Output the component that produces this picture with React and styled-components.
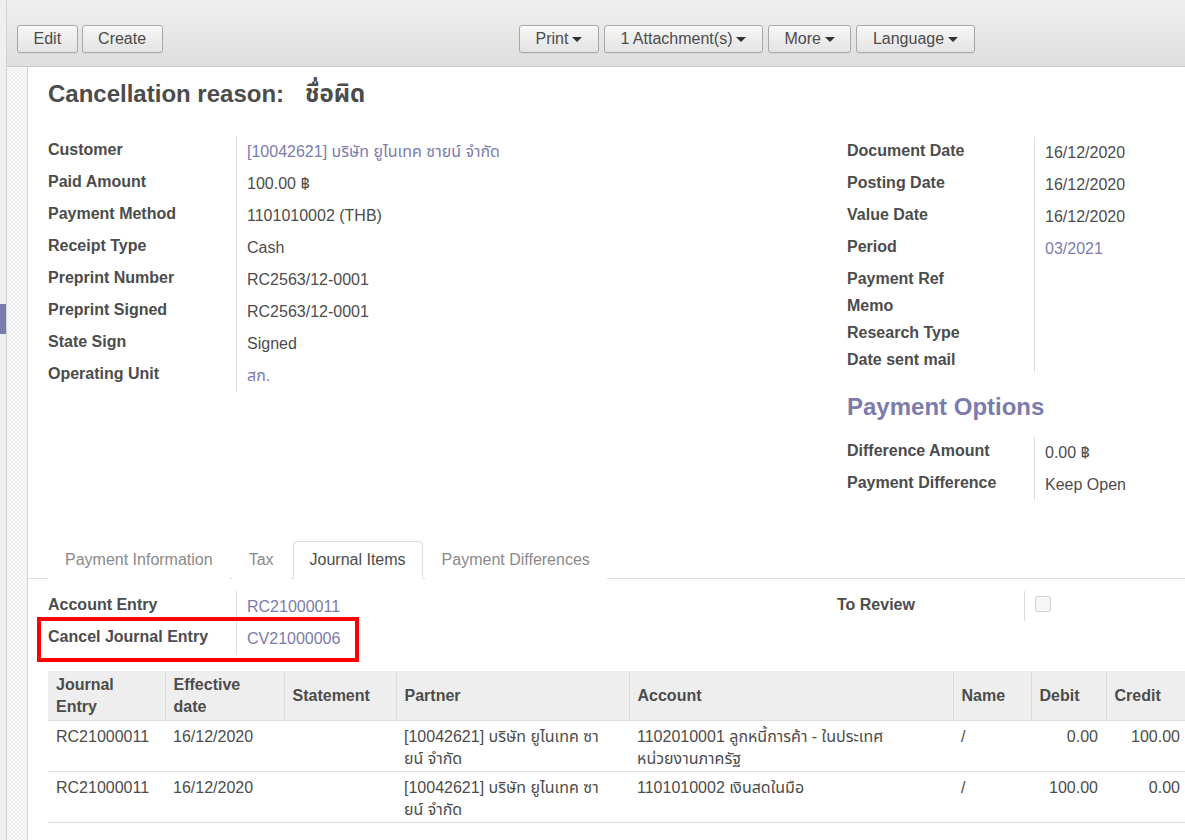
import React from "react";
import styled, { createGlobalStyle } from "styled-components";

const GlobalStyle = createGlobalStyle`
  html, body { margin: 0; padding: 0; overflow: hidden; background: #fff; }
  body {
    font-family: "Liberation Sans", Arial, "Noto Sans Thai", "Noto Sans", sans-serif;
    font-size: 16px;
    color: #4c4c4c;
  }
  * { box-sizing: border-box; }
`;

const Page = styled.div`
  display: flex;
  width: 1185px;
  height: 840px;
  overflow: hidden;
`;

const AppBar = styled.div`
  width: 7px;
  flex: none;
  background: #efefef;
  border-right: 1px solid #d2d2d2;
`;

const AppMarker = styled.div`
  margin-top: 304px;
  width: 6px;
  height: 30px;
  background: #7c7bad;
`;

const Main = styled.div`
  flex: 1;
  display: flex;
  flex-direction: column;
  min-width: 0;
`;

const Toolbar = styled.div`
  height: 67px;
  flex: none;
  display: grid;
  grid-template-columns: 502px auto 1fr;
  align-items: start;
  padding: 25px 0 0 10px;
  background: linear-gradient(to bottom, #f0f0f0, #dedede);
  border-bottom: 1px solid #c9c9c9;
`;

const ButtonGroup = styled.div`
  display: flex;
  gap: ${(p) => p.$gap || 4}px;
`;

const Button = styled.button`
  height: 28px;
  padding: 0 15.5px;
  display: inline-flex;
  align-items: center;
  font-family: inherit;
  font-size: 16px;
  color: #4c4c4c;
  background: linear-gradient(to bottom, #f7f7f7, #e3e3e3);
  border: 1px solid #a8a8a8;
  border-radius: 3px;
  box-shadow: inset 0 1px 0 rgba(255, 255, 255, 0.8), 0 1px 1px rgba(0, 0, 0, 0.06);
  cursor: pointer;
`;

const Caret = styled.span`
  display: inline-block;
  width: 0;
  height: 0;
  margin-left: 4px;
  border-top: 5px solid #333;
  border-left: 5px solid transparent;
  border-right: 5px solid transparent;
`;

const Body = styled.div`
  flex: 1;
  display: flex;
  min-height: 0;
`;

const Gutter = styled.div`
  width: 21px;
  flex: none;
  border-right: 1px solid #d0d0d0;
  background-color: #f7f7f7;
  background-image: repeating-conic-gradient(#efefef 0% 25%, #f9f9f9 0% 50%);
  background-size: 4px 4px;
`;

const Sheet = styled.div`
  flex: 1;
  background: #fff;
  padding: 0 20px;
  min-width: 0;
`;

const Title = styled.h1`
  margin: 13px 0 0;
  display: flex;
  gap: 21px;
  font-size: 24px;
  line-height: 28px;
  font-weight: bold;
  color: #4c4c4c;
`;

const Columns = styled.div`
  display: grid;
  grid-template-columns: ${(p) => p.$left}px 1fr;
  margin-top: ${(p) => p.$top || 0}px;
  align-items: start;
`;

const Column = styled.div`
  display: flex;
  flex-direction: column;
  margin-top: ${(p) => p.$top || 0}px;
`;

const FieldGrid = styled.div`
  display: grid;
  grid-template-columns: ${(p) => p.$label}px 1fr;
`;

const Label = styled.div`
  position: relative;
  font-weight: bold;
  line-height: 20px;
  padding: 4px 10px 3px 0;
  white-space: nowrap;
`;

const Value = styled.div`
  border-left: 1px solid #dddddd;
  line-height: 20px;
  padding: 6px 0 6px 10px;
  color: ${(p) => (p.$link ? "#7c7bad" : "#4c4c4c")};
  white-space: nowrap;
`;

const SectionHeading = styled.h2`
  margin: 20px 0 16px;
  font-size: 24px;
  line-height: 28px;
  font-weight: bold;
  color: #7c7bad;
`;

const Highlight = styled.div`
  position: absolute;
  left: -11px;
  top: -6px;
  width: 322px;
  height: 45px;
  border: 4px solid #f00;
  pointer-events: none;
`;

const Checkbox = styled.span`
  display: block;
  width: 16px;
  height: 16px;
  margin: -1px 0 3px;
  border: 1px solid #cfcfcf;
  border-radius: 3px;
  background: #f7f7f7;
`;

const Tabs = styled.div`
  display: flex;
  margin: 40px -20px 0;
  padding: 0 20px;
  border-bottom: 1px solid #dddddd;
`;

const Tab = styled.div`
  padding: 8px 16px;
  line-height: 20px;
  margin: 0 2px -1px 0;
  border: 1px solid ${(p) => (p.$active ? "#dddddd" : "transparent")};
  border-bottom-color: ${(p) => (p.$active ? "#fff" : "transparent")};
  border-radius: 4px 4px 0 0;
  background: #fff;
  color: ${(p) => (p.$active ? "#4c4c4c" : "#8a8a8a")};
  white-space: nowrap;
`;

const Pane = styled.div`
  padding-top: 12px;
`;

const Table = styled.table`
  margin-top: 16px;
  width: 1140px;
  table-layout: fixed;
  border-collapse: collapse;
`;

const Th = styled.th`
  background: #eeeeee;
  text-align: left;
  vertical-align: middle;
  font-weight: bold;
  line-height: 22px;
  padding: 3px 8px 2px;
  border-bottom: 1px solid #dddddd;
  & + & { border-left: 1px solid #dcdcdc; }
`;

const Td = styled.td`
  text-align: ${(p) => (p.$num ? "right" : "left")};
  vertical-align: top;
  line-height: 22px;
  padding: 5px 8px 1px;
  border-bottom: 1px solid #dddddd;
`;

const leftFields = [
  ["Customer", "[10042621] บริษัท ยูไนเทค ซายน์ จำกัด", true],
  ["Paid Amount", "100.00 ฿"],
  ["Payment Method", "1101010002 (THB)"],
  ["Receipt Type", "Cash"],
  ["Preprint Number", "RC2563/12-0001"],
  ["Preprint Signed", "RC2563/12-0001"],
  ["State Sign", "Signed"],
  ["Operating Unit", "สก.", true],
];

const rightFields = [
  ["Document Date", "16/12/2020"],
  ["Posting Date", "16/12/2020"],
  ["Value Date", "16/12/2020"],
  ["Period", "03/2021", true],
  ["Payment Ref", ""],
  ["Memo", ""],
  ["Research Type", ""],
  ["Date sent mail", ""],
];

const optionFields = [
  ["Difference Amount", "0.00 ฿"],
  ["Payment Difference", "Keep Open"],
];

const cols = [117, 119, 112, 233, 324, 78, 75, 82];

const rows = [
  {
    entry: "RC21000011",
    date: "16/12/2020",
    partner: ["[10042621] บริษัท ยูไนเทค ซา", "ยน์ จำกัด"],
    account: ["1102010001 ลูกหนี้การค้า - ในประเทศ", "หน่วยงานภาครัฐ"],
    name: "/",
    debit: "0.00",
    credit: "100.00",
  },
  {
    entry: "RC21000011",
    date: "16/12/2020",
    partner: ["[10042621] บริษัท ยูไนเทค ซา", "ยน์ จำกัด"],
    account: ["1101010002 เงินสดในมือ"],
    name: "/",
    debit: "100.00",
    credit: "0.00",
  },
];

function Fields({ items, label }) {
  return (
    <FieldGrid $label={label}>
      {items.map(([l, v, link]) => (
        <React.Fragment key={l}>
          <Label>{l}</Label>
          <Value $link={link}>{v}</Value>
        </React.Fragment>
      ))}
    </FieldGrid>
  );
}

function Lines({ parts }) {
  return parts.map((t, i) => (
    <React.Fragment key={i}>
      {i > 0 && <br />}
      {t}
    </React.Fragment>
  ));
}

export default function App() {
  return (
    <>
      <GlobalStyle />
      <Page>
        <AppBar>
          <AppMarker />
        </AppBar>
        <Main>
          <Toolbar>
            <ButtonGroup>
              <Button>Edit</Button>
              <Button>Create</Button>
            </ButtonGroup>
            <ButtonGroup $gap={5}>
              <Button>Print<Caret /></Button>
              <Button>1 Attachment(s)<Caret /></Button>
              <Button>More<Caret /></Button>
              <Button>Language<Caret /></Button>
            </ButtonGroup>
          </Toolbar>
          <Body>
            <Gutter />
            <Sheet>
              <Title>
                <span>Cancellation reason:</span>
                <span>ชื่อผิด</span>
              </Title>
              <Columns $left={799} $top={28}>
                <Fields items={leftFields} label={188} />
                <Column $top={1}>
                  <Fields items={rightFields} label={187} />
                  <SectionHeading>Payment Options</SectionHeading>
                  <Fields items={optionFields} label={187} />
                </Column>
              </Columns>

              <Tabs>
                <Tab>Payment Information</Tab>
                <Tab>Tax</Tab>
                <Tab $active>Journal Items</Tab>
                <Tab>Payment Differences</Tab>
              </Tabs>
              <Pane>
                <Columns $left={789}>
                  <FieldGrid $label={188}>
                    <Label>Account Entry</Label>
                    <Value $link>RC21000011</Value>
                    <Label>
                      Cancel Journal Entry
                      <Highlight />
                    </Label>
                    <Value $link>CV21000006</Value>
                  </FieldGrid>
                  <FieldGrid $label={187}>
                    <Label>To Review</Label>
                    <Value>
                      <Checkbox />
                    </Value>
                  </FieldGrid>
                </Columns>
                <Table>
                  <colgroup>
                    {cols.map((w, i) => (
                      <col key={i} style={{ width: w }} />
                    ))}
                  </colgroup>
                  <thead>
                    <tr>
                      <Th>Journal Entry</Th>
                      <Th>Effective date</Th>
                      <Th>Statement</Th>
                      <Th>Partner</Th>
                      <Th>Account</Th>
                      <Th>Name</Th>
                      <Th>Debit</Th>
                      <Th>Credit</Th>
                    </tr>
                  </thead>
                  <tbody>
                    {rows.map((r, i) => (
                      <tr key={i}>
                        <Td>{r.entry}</Td>
                        <Td>{r.date}</Td>
                        <Td></Td>
                        <Td><Lines parts={r.partner} /></Td>
                        <Td><Lines parts={r.account} /></Td>
                        <Td>{r.name}</Td>
                        <Td $num>{r.debit}</Td>
                        <Td $num>{r.credit}</Td>
                      </tr>
                    ))}
                  </tbody>
                </Table>
              </Pane>
            </Sheet>
          </Body>
        </Main>
      </Page>
    </>
  );
}
